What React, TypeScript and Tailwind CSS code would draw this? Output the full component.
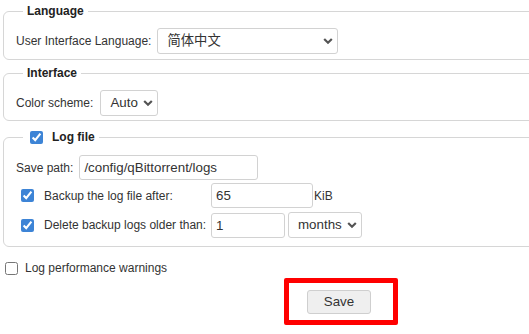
import React from "react";

function Chevron() {
  return (
    <svg width="10" height="7" viewBox="0 0 10 7" className="pointer-events-none absolute right-[5px] top-1/2 -translate-y-1/2">
      <path d="M1.2 1.5 L5 5.2 L8.8 1.5" fill="none" stroke="#555" strokeWidth="2.2" />
    </svg>
  );
}

function Select({ value, w }: { value: string; w: string }) {
  return (
    <div className={`relative h-[26px] ${w}`}>
      <select
        defaultValue={value}
        className="h-full w-full appearance-none rounded-[3px] border border-[#d2d2d2] bg-white pl-[9px] text-[13.33px] text-[#333] outline-none"
      >
        <option value={value}>{value}</option>
      </select>
      <Chevron />
    </div>
  );
}

function Check({ checked, className = "" }: { checked: boolean; className?: string }) {
  return (
    <input
      type="checkbox"
      defaultChecked={checked}
      className={`m-0 h-[13px] w-[13px] shrink-0 accent-[#3d84d6] ${className}`}
    />
  );
}

export default function App() {
  return (
    <div className="h-[334px] w-[529px] overflow-hidden whitespace-nowrap bg-white pl-[3px] pt-[3px] font-['Liberation_Sans','Noto_Sans_CJK_SC',Arial,sans-serif] text-[12px] text-[#333]">
      <fieldset className="w-[600px] rounded-[6px] border border-[#d6d6d6] px-3 pb-[5px] pt-[9px]">
        <legend className="ml-[7px] h-4 px-1 text-[12px] font-bold leading-4 text-[#222]">Language</legend>
        <div className="flex h-[26px] items-center">
          <span>User Interface Language:</span>
          <div className="ml-[6px]">
            <Select value="简体中文" w="w-[181px]" />
          </div>
        </div>
      </fieldset>

      <fieldset className="mt-[5px] w-[600px] rounded-[6px] border border-[#d6d6d6] px-3 pb-[4px] pt-[9px]">
        <legend className="ml-[7px] h-4 px-1 text-[12px] font-bold leading-4 text-[#222]">Interface</legend>
        <div className="flex h-[26px] items-center">
          <span>Color scheme:</span>
          <div className="ml-[7px]">
            <Select value="Auto" w="w-[58px]" />
          </div>
        </div>
      </fieldset>

      <fieldset className="mt-[6px] w-[600px] rounded-[6px] border border-[#d6d6d6] px-3 pb-[8px] pt-[8px]">
        <legend className="ml-[7px] flex h-5 items-center px-1 text-[12px] font-bold leading-4 text-[#222]">
          <Check checked className="ml-[3px]" />
          <span className="ml-[9px]">Log file</span>
        </legend>
        <div className="flex h-[25px] items-center">
          <span>Save path:</span>
          <input
            defaultValue="/config/qBittorrent/logs"
            className="ml-[6px] h-[25px] w-[179px] rounded-[3px] border border-[#d2d2d2] px-1 text-[13.33px] text-[#333] outline-none"
          />
        </div>
        <div className="mt-[3px] flex h-[25px] items-center">
          <div className="flex w-[195px] items-center">
            <Check checked className="ml-[5px]" />
            <span className="ml-[10px]">Backup the log file after:</span>
          </div>
          <input
            defaultValue="65"
            className="h-[25px] w-[102px] rounded-[3px] border border-[#d2d2d2] px-1 text-[13.33px] text-[#333] outline-none"
          />
          <span className="ml-[1px]">KiB</span>
        </div>
        <div className="mt-[4px] flex h-[26px] items-center">
          <div className="flex w-[195px] items-center">
            <Check checked className="ml-[5px]" />
            <span className="ml-[10px]">Delete backup logs older than:</span>
          </div>
          <input
            defaultValue="1"
            className="h-[25px] w-[74px] rounded-[3px] border border-[#d2d2d2] px-1 text-[13.33px] text-[#333] outline-none"
          />
          <div className="ml-[3px]">
            <Select value="months" w="w-[74px]" />
          </div>
        </div>
      </fieldset>

      <div className="mt-[11px] flex h-5 items-center">
        <Check checked={false} className="ml-[2px]" />
        <span className="ml-[7px]">Log performance warnings</span>
      </div>

      <div className="ml-[281px] h-[47px] w-[114px] rounded-[2px] border-[5px] border-[#ff0000] pl-[18px] pt-[7px]">
        <button className="h-[24px] w-[64px] rounded-[3px] border border-[#cfcfcf] bg-[#efefef] text-[13.33px] text-[#333]">
          Save
        </button>
      </div>
    </div>
  );
}
